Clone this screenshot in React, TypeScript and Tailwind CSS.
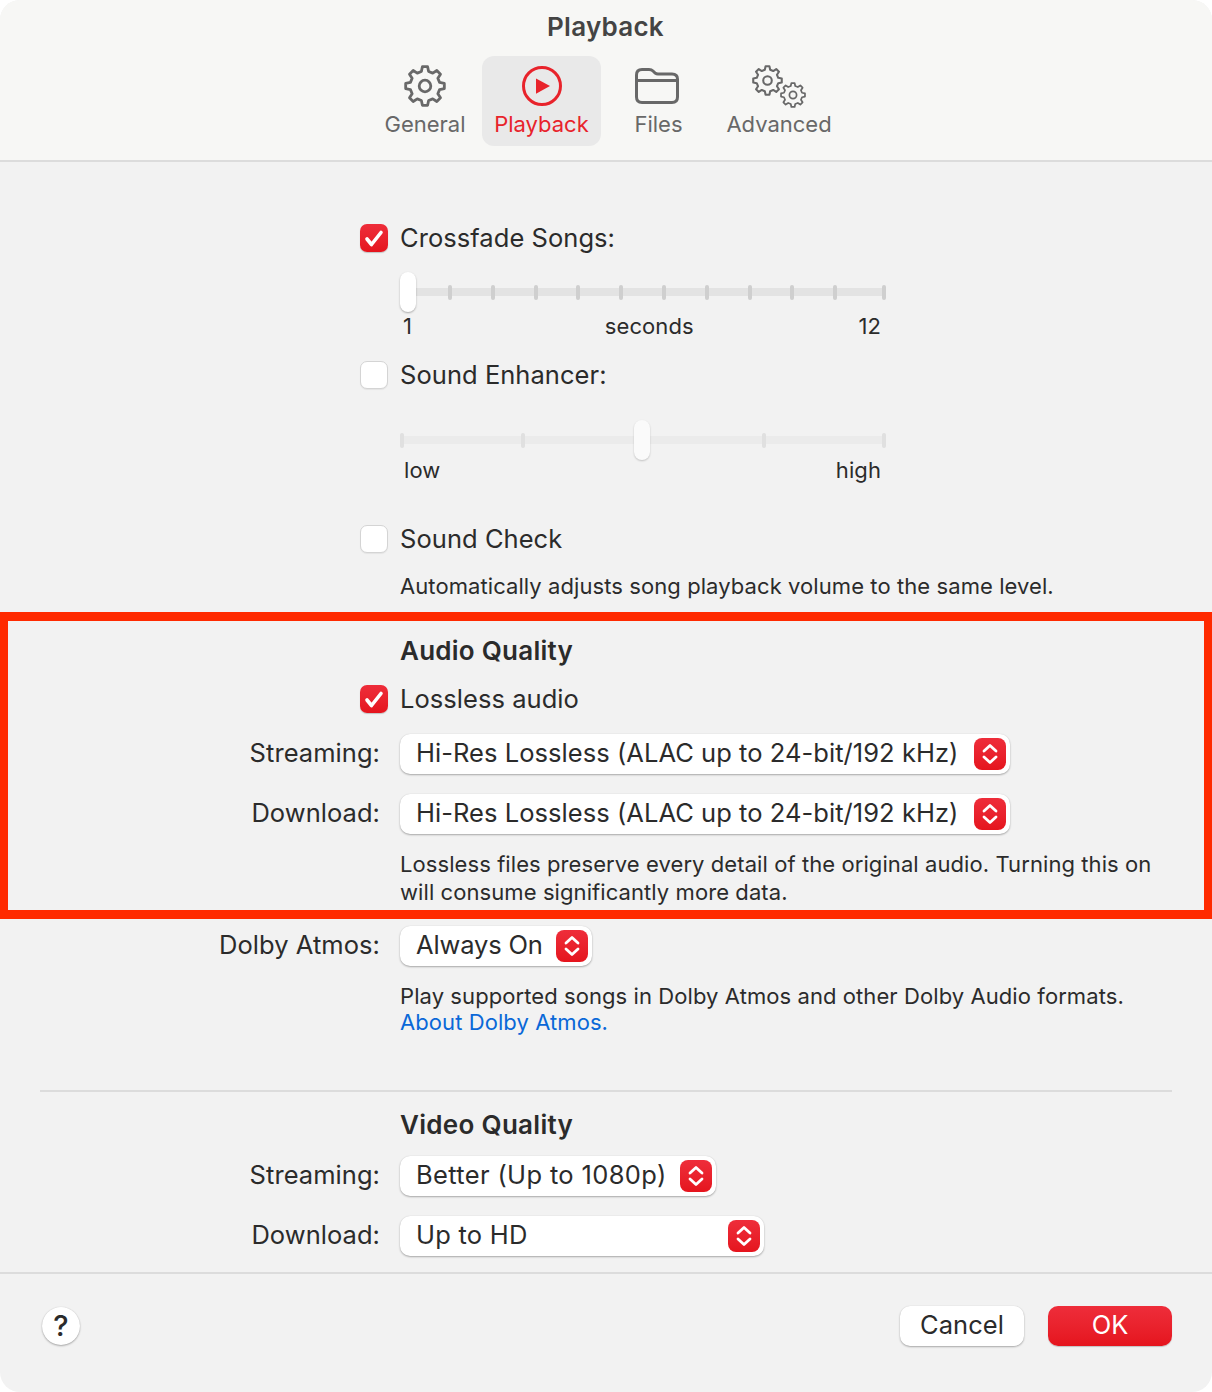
const font = { fontFamily: "Inter, 'Noto Sans', sans-serif" };

// builds the outline of a cog wheel, used by the toolbar icons
function gearPath(cx: number, cy: number, outer: number, inner: number, teeth: number) {
  const pts: string[] = [];
  const step = (Math.PI * 2) / teeth;
  for (let i = 0; i < teeth; i++) {
    const a = i * step - Math.PI / 2;
    const list: [number, number][] = [
      [a - step * 0.31, inner],
      [a - step * 0.17, outer],
      [a + step * 0.17, outer],
      [a + step * 0.31, inner],
    ];
    for (const [t, r] of list) {
      pts.push(`${(cx + Math.cos(t) * r).toFixed(2)} ${(cy + Math.sin(t) * r).toFixed(2)}`);
    }
  }
  return "M" + pts.join("L") + "Z";
}

function Gear({ size }: { size: number }) {
  return (
    <svg width={size} height={size} viewBox="0 0 42 42" fill="none" stroke="currentColor" strokeWidth={2.8} strokeLinejoin="round">
      <path d={gearPath(21, 21, 19.5, 15, 8)} />
      <circle cx={21} cy={21} r={5.8} />
    </svg>
  );
}

function Tab({ label, active, width, children }: { label: string; active?: boolean; width: string; children: React.ReactNode }) {
  return (
    <div className={`${width} h-[90px] rounded-[12px] flex flex-col items-center ${active ? "bg-[#e9e9e9] text-[#e8232b]" : "text-[#686868]"}`}>
      <div className="h-[60px] w-full flex items-center justify-center">{children}</div>
      <div className="text-[22px] leading-[17px] whitespace-nowrap">{label}</div>
    </div>
  );
}

function Check({ checked }: { checked?: boolean }) {
  if (checked) {
    return (
      <div className="w-[28px] h-[28px] rounded-[7px] bg-gradient-to-b from-[#ee2d3a] to-[#e5141d] shadow-[0_1px_1px_rgba(0,0,0,0.2)]">
        <svg width="28" height="28" viewBox="0 0 28 28" fill="none" stroke="white" strokeWidth={3.6} strokeLinecap="round" strokeLinejoin="round">
          <path d="M7 15 L11.5 20.5 L21 8.5" />
        </svg>
      </div>
    );
  }
  return <div className="w-[28px] h-[28px] rounded-[7px] bg-white border border-[#d4d4d4] shadow-[0_1px_1px_rgba(0,0,0,0.06)]" />;
}

function CheckRow({ label, checked, gutter }: { label: string; checked?: boolean; gutter: string }) {
  return (
    <div className={`h-[28px] flex items-center ${gutter}`}>
      <Check checked={checked} />
      <span className="ml-[12px] text-[25.5px] tracking-[0.05px] text-[#2b2b2b] whitespace-nowrap">{label}</span>
    </div>
  );
}

function Stepper() {
  return (
    <div className="w-[32px] h-[32px] rounded-[8px] bg-gradient-to-b from-[#ee2d3a] to-[#e5141d] flex items-center justify-center">
      <svg width="20" height="26" viewBox="0 0 20 26" fill="none" stroke="white" strokeWidth={2.8} strokeLinecap="round" strokeLinejoin="round">
        <path d="M4 10 L10 4.5 L16 10" />
        <path d="M4 16 L10 21.5 L16 16" />
      </svg>
    </div>
  );
}

function SelectRow({ label, value, width, mt, labelW, track = "tracking-[0.05px]" }: { label: string; value: string; width: string; mt: string; labelW: string; track?: string }) {
  return (
    <div className={`flex items-center h-[40px] ${mt}`}>
      <div className={`${labelW} pr-[20px] pb-[2px] text-right text-[25.5px] tracking-[0.05px] text-[#2b2b2b] whitespace-nowrap`}>{label}</div>
      <div className={`${width} h-[40px] rounded-[10px] bg-white shadow-[0_1px_2px_rgba(0,0,0,0.3),0_0_1px_rgba(0,0,0,0.12)] flex items-center justify-between pl-[16px] pr-[4px]`}>
        <span className={`pb-[2px] text-[25.5px] ${track} text-[#2b2b2b] whitespace-nowrap`}>{value}</span>
        <Stepper />
      </div>
    </div>
  );
}

function Tick({ light }: { light?: boolean }) {
  return <div className={`w-[4px] h-[15px] rounded-[2px] shrink-0 ${light ? "bg-[#e0e0e0]" : "bg-[#cfcfcf]"}`} />;
}

function Footer() {
  return (
    <div className="flex-1 border-t-2 border-[#dcdcdc] flex items-start px-[40px] pt-[32px] text-[25.5px] tracking-[0.05px]">
      <div className="ml-[2px] mt-[1px] w-[38px] h-[38px] rounded-full bg-white shadow-[0_1px_2px_rgba(0,0,0,0.3),0_0_1px_rgba(0,0,0,0.15)] flex items-center justify-center text-[#2b2b2b] font-medium text-[29px]">?</div>
      <div className="ml-auto w-[124px] h-[40px] rounded-[10px] bg-white shadow-[0_1px_2px_rgba(0,0,0,0.3),0_0_1px_rgba(0,0,0,0.12)] flex items-center justify-center pb-[2px] text-[#2b2b2b]">Cancel</div>
      <div className="ml-[24px] w-[124px] h-[40px] rounded-[10px] bg-gradient-to-b from-[#ee2d3a] to-[#e5141d] shadow-[0_1px_1px_rgba(0,0,0,0.2)] flex items-center justify-center pb-[2px] text-white">OK</div>
    </div>
  );
}

export default function App() {
  return (
    <div className="w-[1212px] h-[1392px] bg-white" style={font}>
      <div className="w-full h-full rounded-[20px] overflow-hidden bg-[#f2f2f2] flex flex-col">
        {/* toolbar */}
        <div className="h-[162px] bg-[#f7f7f5] border-b-2 border-[#dcdcdc] shrink-0">
          <div className="h-[56px] pt-[9px] pr-[1px] text-center text-[26px] tracking-[0.25px] leading-[36px] font-semibold text-[#444]">Playback</div>
          <div className="flex justify-center gap-[5px] pl-[3px]">
            <Tab label="General" width="w-[104px]"><Gear size={42} /></Tab>
            <Tab label="Playback" width="w-[119px]" active>
              <svg width="40" height="40" viewBox="0 0 40 40" fill="none">
                <circle cx="20" cy="20" r="18.5" stroke="currentColor" strokeWidth="3" />
                <path d="M14 12.5 L28 20 L14 27.8 Z" fill="currentColor" />
              </svg>
            </Tab>
            <Tab label="Files" width="w-[105px]">
              <svg className="mr-[3px]" width="44" height="36" viewBox="0 0 44 36" fill="none" stroke="currentColor" strokeWidth="3" strokeLinejoin="round">
                <path d="M1.5 7 Q1.5 1.5 7 1.5 H14 Q16.5 1.5 18 3 L20 5 Q21.5 6 23 6 H37 Q42.5 6 42.5 11 V29 Q42.5 34.5 37 34.5 H7 Q1.5 34.5 1.5 29 Z" />
                <path d="M1.5 12.5 H42.5" />
              </svg>
            </Tab>
            <Tab label="Advanced" width="w-[126px]">
              <div className="flex items-start">
                <Gear size={31} />
                <div className="mt-[17px] ml-[-3px]"><Gear size={26} /></div>
              </div>
            </Tab>
          </div>
        </div>

        {/* crossfade, enhancer, sound check */}
        <div className="mt-[62px]"><CheckRow label="Crossfade Songs:" checked gutter="pl-[360px]" /></div>
        <div className="mt-[20px] ml-[400px] w-[486px] h-[40px] relative flex items-center">
          <div className="absolute left-0 right-0 top-[16px] h-[8px] bg-[#e3e3e3]" />
          <div className="relative w-full flex items-center pl-[48px] gap-[38.8px]">
            {Array.from({ length: 10 }).map((_, i) => <Tick key={i} />)}
            <div className="ml-auto"><Tick /></div>
          </div>
          <div className="absolute left-0 top-0 w-[16px] h-[40px] rounded-[8px] bg-white shadow-[0_1px_2px_rgba(0,0,0,0.3)]" />
        </div>
        <div className="mt-[2px] ml-[403px] w-[478px] h-[24px] flex justify-between items-center text-[22px] tracking-[0.08px] text-[#2b2b2b]">
          <span>1</span><span className="ml-[28px]">seconds</span><span>12</span>
        </div>
        <div className="mt-[23px]"><CheckRow label="Sound Enhancer:" gutter="pl-[360px]" /></div>
        <div className="mt-[31px] ml-[400px] w-[486px] h-[40px] relative flex items-center">
          <div className="absolute left-0 right-0 top-[16px] h-[8px] bg-[#ebebeb]" />
          <div className="relative w-full flex items-center justify-between">
            <Tick light /><Tick light /><div className="w-[4px]" /><Tick light /><Tick light />
          </div>
          <div className="absolute left-[234px] top-0 w-[16px] h-[40px] rounded-[8px] bg-[#fafafa] shadow-[0_1px_2px_rgba(0,0,0,0.2)]" />
        </div>
        <div className="ml-[404px] w-[477px] h-[20px] flex justify-between items-center text-[22px] tracking-[0.08px] text-[#2b2b2b]">
          <span>low</span><span>high</span>
        </div>
        <div className="mt-[45px]"><CheckRow label="Sound Check" gutter="pl-[360px]" /></div>
        <div className="mt-[21px] ml-[400px] h-[24px] leading-[24px] text-[22px] tracking-[0.08px] text-[#2b2b2b] whitespace-nowrap">Automatically adjusts song playback volume to the same level.</div>

        {/* highlighted audio quality block */}
        <div className="mt-[14px] h-[307px] border-x-[8px] border-y-[9px] border-[#ff2a00] shrink-0">
          <div className="mt-[16px] ml-[392px] h-[28px] leading-[28px] text-[26px] tracking-[0.25px] font-semibold text-[#2b2b2b]">Audio Quality</div>
          <div className="mt-[20px]"><CheckRow label="Lossless audio" checked gutter="pl-[352px]" /></div>
          <SelectRow label="Streaming:" value="Hi-Res Lossless (ALAC up to 24-bit/192 kHz)" width="w-[610px]" mt="mt-[21px]" labelW="w-[392px]" />
          <SelectRow label="Download:" value="Hi-Res Lossless (ALAC up to 24-bit/192 kHz)" width="w-[610px]" mt="mt-[20px]" labelW="w-[392px]" />
          <div className="mt-[16px] ml-[392px] text-[22px] tracking-[0.08px] leading-[28px] text-[#2b2b2b] whitespace-nowrap">
            Lossless files preserve every detail of the original audio. Turning this on<br />
            will consume significantly more data.
          </div>
        </div>

        <SelectRow label="Dolby Atmos:" value="Always On" width="w-[192px]" mt="mt-[7px]" labelW="w-[400px]" track="tracking-[-0.15px]" />
        <div className="mt-[17px] ml-[400px] text-[22px] tracking-[0.08px] leading-[26px] text-[#2b2b2b] whitespace-nowrap">
          Play supported songs in Dolby Atmos and other Dolby Audio formats.<br />
          <span className="text-[#0a68d8]">About Dolby Atmos.</span>
        </div>
        <div className="mt-[55px] mx-[40px] h-[2px] bg-[#dcdcdc] shrink-0" />
        <div className="mt-[19px] ml-[400px] h-[28px] leading-[28px] text-[26px] tracking-[0.3px] font-semibold text-[#2b2b2b]">Video Quality</div>
        <SelectRow label="Streaming:" value="Better (Up to 1080p)" width="w-[316px]" mt="mt-[17px]" labelW="w-[400px]" track="tracking-[0.35px]" />
        <SelectRow label="Download:" value="Up to HD" width="w-[364px]" mt="mt-[20px]" labelW="w-[400px]" track="tracking-[0.25px]" />
        <div className="mt-[16px]" />
        <Footer />
      </div>
    </div>
  );
}
